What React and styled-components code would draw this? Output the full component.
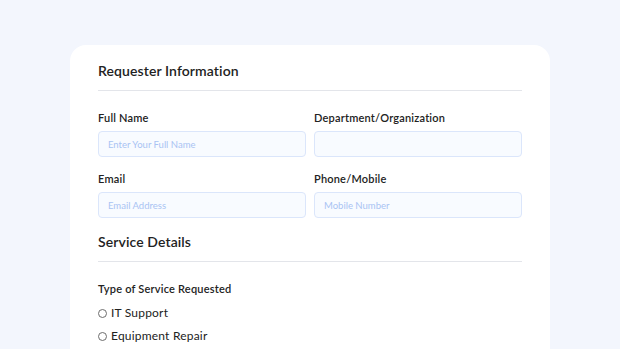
import React from "react";
import styled, { createGlobalStyle } from "styled-components";

const Global = createGlobalStyle`
  body {
    margin: 0;
    background: #f3f6fd;
    font-family: "Lato", "Noto Sans", sans-serif;
    color: #1f1f1f;
  }
`;

const Page = styled.div`
  padding: 45px 70px 0;
  height: 349px;
  box-sizing: border-box;
  overflow: hidden;
`;

const Card = styled.div`
  background: #ffffff;
  border-radius: 16px 16px 0 0;
  padding: 16px 28px 0;
  height: 400px;
`;

const SectionTitle = styled.h2`
  margin: 0;
  font-size: 14px;
  font-weight: 600;
  line-height: 20px;
  letter-spacing: 0.1px;
  color: #222;
  padding-bottom: 9px;
  border-bottom: 1px solid #e3e5ea;
`;

const Grid = styled.div`
  display: grid;
  grid-template-columns: 1fr 1fr;
  column-gap: 8px;
  row-gap: 15px;
  margin-top: 20px;
  margin-bottom: 14px;
`;

const Field = styled.div`
  display: flex;
  flex-direction: column;
  gap: 6px;
`;

const Label = styled.label`
  font-size: 11px;
  font-weight: 600;
  line-height: 14px;
  letter-spacing: 0.2px;
  color: #222;
`;

const Input = styled.input`
  height: 26px;
  box-sizing: border-box;
  border: 1px solid #dbe6fb;
  border-radius: 4px;
  background: #f8fbff;
  padding: 0 9px;
  font-family: inherit;
  font-size: 9.5px;
  outline: none;
  &::placeholder {
    color: #a9c3f3;
  }
`;

const Group = styled.div`
  margin-top: 20px;
  display: flex;
  flex-direction: column;
`;

const Options = styled.div`
  display: flex;
  flex-direction: column;
  gap: 7px;
  margin-top: 9px;
`;

const Option = styled.label`
  display: flex;
  align-items: center;
  gap: 4px;
  font-size: 12px;
  line-height: 16px;
  letter-spacing: 0.2px;
  color: #222;
`;

const Radio = styled.span`
  width: 7px;
  height: 7px;
  border: 1px solid #6d6d6d;
  border-radius: 50%;
`;

export default function App() {
  return (
    <>
      <Global />
      <Page>
        <Card>
          <SectionTitle>Requester Information</SectionTitle>
          <Grid>
            <Field>
              <Label>Full Name</Label>
              <Input placeholder="Enter Your Full Name" />
            </Field>
            <Field>
              <Label>Department/Organization</Label>
              <Input />
            </Field>
            <Field>
              <Label>Email</Label>
              <Input placeholder="Email Address" />
            </Field>
            <Field>
              <Label>Phone/Mobile</Label>
              <Input placeholder="Mobile Number" />
            </Field>
          </Grid>
          <SectionTitle>Service Details</SectionTitle>
          <Group>
            <Label>Type of Service Requested</Label>
            <Options>
              <Option>
                <Radio />
                IT Support
              </Option>
              <Option>
                <Radio />
                Equipment Repair
              </Option>
            </Options>
          </Group>
        </Card>
      </Page>
    </>
  );
}
